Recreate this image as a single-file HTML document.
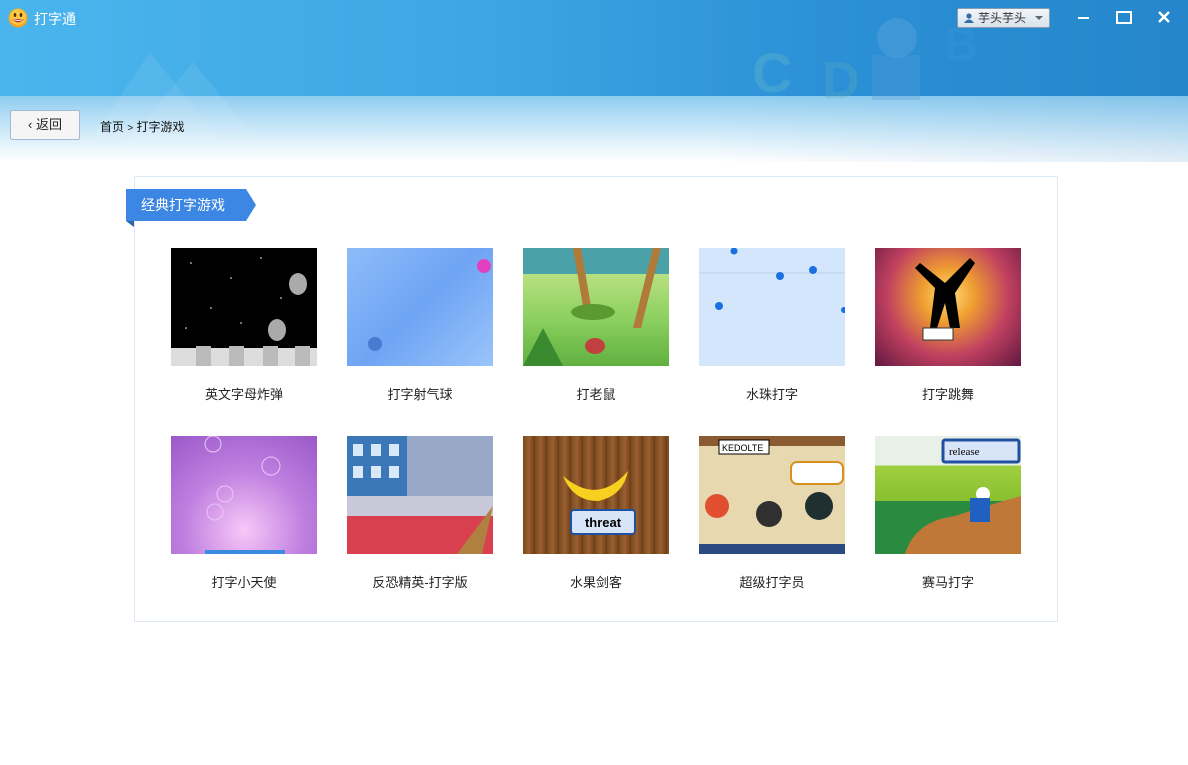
<!DOCTYPE html>
<html><head><meta charset="utf-8">
<style>
*{margin:0;padding:0;box-sizing:border-box}
body{width:1188px;height:765px;overflow:hidden;background:#fff;font-family:"Liberation Sans","Noto Sans CJK SC",sans-serif;position:relative}
.top{position:absolute;left:0;top:0;width:1188px;height:96px;background:linear-gradient(90deg,#4ab5ed 0%,#3ea6e3 40%,#2b90d6 70%,#2586cb 100%)}
.fade{position:absolute;left:0;top:96px;width:1188px;height:66px;background:linear-gradient(180deg,#8fcdf0 0%,#b9e0f6 35%,#e6f4fc 75%,#fff 100%)}
.fade2{position:absolute;left:0;top:96px;width:1188px;height:66px;background:linear-gradient(90deg,rgba(255,255,255,0) 0%,rgba(255,255,255,0) 60%,rgba(60,140,200,.15) 100%)}
.title{position:absolute;left:34px;top:9px;color:#fff;font-size:14px}
.btn{position:absolute;left:10px;top:110px;width:70px;height:30px;border:1px solid #a6b8d8;border-radius:2px;background:#f5f5f5;font-size:13px;color:#222;text-align:center;line-height:28px}
.crumb{position:absolute;left:100px;top:118px;font-size:12px;color:#111}
.user{position:absolute;left:957px;top:8px;width:93px;height:20px;border:1px solid #8a9db0;border-radius:2px;background:linear-gradient(#f2f6fa,#d8e2ec);font-size:12px;color:#333;line-height:18px;padding-left:20px}
.panel{position:absolute;left:134px;top:176px;width:924px;height:446px;border:1px solid #dde9f5}
.tag{position:absolute;left:126px;top:189px;width:120px;height:32px;background:#3b87e3;color:#fff;font-size:14px;line-height:32px;padding-left:15px}
.tag:after{content:"";position:absolute;right:-10px;top:0;border-left:10px solid #3b87e3;border-top:16px solid transparent;border-bottom:16px solid transparent}
.tag:before{content:"";position:absolute;left:0;bottom:-6px;border-top:6px solid #2a63a8;border-left:8px solid transparent}
.g{position:absolute;width:146px;height:118px;overflow:hidden}
.l{position:absolute;width:146px;text-align:center;font-size:13px;color:#222}
</style></head><body>
<div class="top"></div>
<div class="fade"></div><div class="fade2"></div>
<svg style="position:absolute;left:0;top:0" width="1188" height="160">
<polygon points="150,52 90,140 220,140" fill="#fff" opacity=".08"/>
<polygon points="193,62 120,150 265,150" fill="#fff" opacity=".08"/>
<text x="752" y="92" font-size="56" font-weight="bold" fill="#6cc0c8" opacity=".3" font-family="Liberation Sans">C</text>
<text x="822" y="98" font-size="52" font-weight="bold" fill="#5ab0c0" opacity=".3" font-family="Liberation Sans">D</text>
<circle cx="897" cy="38" r="20" fill="#6aa8e0" opacity=".35"/>
<rect x="872" y="55" width="48" height="45" fill="#5a9ad8" opacity=".3"/>
<text x="945" y="60" font-size="46" font-weight="bold" fill="#3a95e0" opacity=".35" font-family="Liberation Sans">B</text>
</svg>
<svg style="position:absolute;left:8px;top:8px" width="20" height="20"><circle cx="10" cy="10" r="9.5" fill="#f6a623"/><circle cx="10" cy="9" r="8" fill="#fbc843"/><ellipse cx="7" cy="7" rx="1.3" ry="2" fill="#5a2d00"/><ellipse cx="13" cy="7" rx="1.3" ry="2" fill="#5a2d00"/><path d="M4 11 Q10 18 16 11 Z" fill="#c0392b"/><path d="M5 11 Q10 13 15 11 L14.5 12 Q10 14 5.5 12Z" fill="#fff"/></svg>
<div class="title">打字通</div>
<div class="user"><svg style="position:absolute;left:6px;top:4px" width="10" height="10"><circle cx="5" cy="3" r="2.6" fill="#2f6fa8"/><path d="M0 10 Q5 3 10 10Z" fill="#2f6fa8"/></svg>芋头芋头<span style="position:absolute;right:6px;top:7px;border-top:4px solid #666;border-left:4px solid transparent;border-right:4px solid transparent"></span></div>
<div style="position:absolute;left:1078px;top:17px;width:11px;height:2px;background:#fff"></div>
<div style="position:absolute;left:1116px;top:11px;width:16px;height:13px;border:2px solid #fff"></div>
<svg style="position:absolute;left:1158px;top:11px" width="12" height="12"><path d="M1 1L11 11M11 1L1 11" stroke="#fff" stroke-width="2.4"/></svg>
<div class="btn">&lsaquo; 返回</div>
<div class="crumb">首页 <span style="font-size:10px">&gt;</span> 打字游戏</div>
<div class="panel"></div>
<div class="tag">经典打字游戏</div>

<div class="g" style="left:171px;top:248px;background:#000"><svg width="146" height="118"><g fill="#fff"><circle cx="20" cy="15" r=".8"/><circle cx="60" cy="30" r=".8"/><circle cx="90" cy="10" r=".8"/><circle cx="40" cy="60" r=".8"/><circle cx="110" cy="50" r=".8"/><circle cx="15" cy="80" r=".8"/><circle cx="70" cy="75" r=".8"/></g><ellipse cx="127" cy="36" rx="9" ry="11" fill="#aaa"/><ellipse cx="106" cy="82" rx="9" ry="11" fill="#aaa"/><rect x="0" y="100" width="146" height="18" fill="#ddd"/><g fill="#bbb"><rect x="25" y="98" width="15" height="20"/><rect x="58" y="98" width="15" height="20"/><rect x="92" y="98" width="15" height="20"/><rect x="124" y="98" width="15" height="20"/></g></svg></div>
<div class="l" style="left:171px;top:384px">英文字母炸弹</div>
<div class="g" style="left:347px;top:248px;background:linear-gradient(135deg,#8ebcf8,#6ea4f4 50%,#9ac4fa)"><svg width="146" height="118"><circle cx="137" cy="18" r="7" fill="#e040c0"/><circle cx="28" cy="96" r="7" fill="#4a7ad0"/></svg></div>
<div class="l" style="left:347px;top:384px">打字射气球</div>
<div class="g" style="left:523px;top:248px;background:linear-gradient(#4aa2a8 0,#4aa2a8 22%,#b8e080 22%,#8cd060 60%,#60b040)"><svg width="146" height="118"><path d="M50 0 L62 70 L70 70 L58 0Z" fill="#b07a3a"/><path d="M130 0 L110 80 L118 80 L138 0Z" fill="#b07a3a"/><ellipse cx="70" cy="64" rx="22" ry="8" fill="#5a9a30"/><ellipse cx="72" cy="98" rx="10" ry="8" fill="#c04040"/><path d="M0 118 L20 80 L40 118Z" fill="#3a8a30"/></svg></div>
<div class="l" style="left:523px;top:384px">打老鼠</div>
<div class="g" style="left:699px;top:248px;background:#d4e6fc"><svg width="146" height="118"><line x1="0" y1="25" x2="146" y2="25" stroke="#b8cde8"/><g fill="#1a70e0"><circle cx="35" cy="3" r="3.5"/><circle cx="81" cy="28" r="4"/><circle cx="114" cy="22" r="4"/><circle cx="20" cy="58" r="4"/><circle cx="145" cy="62" r="3"/></g></svg></div>
<div class="l" style="left:699px;top:384px">水珠打字</div>
<div class="g" style="left:875px;top:248px;background:radial-gradient(circle at 50% 40%,#ffe080 0,#f0a030 25%,#c04060 60%,#601840 100%)"><svg width="146" height="118"><path d="M60 40 L40 20 L45 15 L70 35 L95 10 L100 15 L80 45 L85 80 L75 80 L70 55 L62 80 L55 80Z" fill="#000"/><rect x="48" y="80" width="30" height="12" fill="#fff" stroke="#333"/></svg></div>
<div class="l" style="left:875px;top:384px">打字跳舞</div>

<div class="g" style="left:171px;top:436px;background:radial-gradient(circle at 50% 80%,#f8c8f8,#c080e0 50%,#9a58c8)"><svg width="146" height="118"><g fill="none" stroke="#e8c8f8"><circle cx="42" cy="8" r="8"/><circle cx="100" cy="30" r="9"/><circle cx="54" cy="58" r="8"/><circle cx="44" cy="76" r="8"/></g><rect x="34" y="114" width="80" height="4" fill="#3a8ae0"/></svg></div>
<div class="l" style="left:171px;top:572px">打字小天使</div>
<div class="g" style="left:347px;top:436px;background:#9aa8c8"><svg width="146" height="118"><rect x="0" y="0" width="60" height="118" fill="#3a78b8"/><g fill="#d8e8f8"><rect x="6" y="8" width="10" height="12"/><rect x="24" y="8" width="10" height="12"/><rect x="42" y="8" width="10" height="12"/><rect x="6" y="30" width="10" height="12"/><rect x="24" y="30" width="10" height="12"/><rect x="42" y="30" width="10" height="12"/></g><rect x="0" y="60" width="146" height="58" fill="#c8c8d8"/><rect x="0" y="80" width="146" height="38" fill="#d84050"/><path d="M146 70 L110 118 L135 118Z" fill="#b08040"/></svg></div>
<div class="l" style="left:347px;top:572px">反恐精英-打字版</div>
<div class="g" style="left:523px;top:436px;background:repeating-linear-gradient(90deg,#7a4a20 0,#9a6030 6px,#6a3c18 12px)"><svg width="146" height="118"><path d="M40 40 Q75 70 105 35 Q100 60 75 65 Q50 65 40 40Z" fill="#f8d020"/><rect x="48" y="74" width="64" height="24" rx="3" fill="#d8e4f8" stroke="#2050a0" stroke-width="2"/><text x="80" y="91" font-size="13" font-weight="bold" text-anchor="middle" font-family="Liberation Sans" fill="#000">threat</text></svg></div>
<div class="l" style="left:523px;top:572px">水果剑客</div>
<div class="g" style="left:699px;top:436px;background:#e8d8b0"><svg width="146" height="118"><rect x="0" y="0" width="146" height="10" fill="#8a5a30"/><rect x="20" y="4" width="50" height="14" fill="#fff" stroke="#000"/><text x="23" y="15" font-size="9" font-family="Liberation Sans">KEDOLTE</text><rect x="92" y="26" width="52" height="22" rx="6" fill="#fff" stroke="#d89020" stroke-width="2"/><circle cx="18" cy="70" r="12" fill="#e05030"/><circle cx="70" cy="78" r="13" fill="#303030"/><circle cx="120" cy="70" r="14" fill="#203030"/><rect x="0" y="108" width="146" height="10" fill="#2a4a80"/></svg></div>
<div class="l" style="left:699px;top:572px">超级打字员</div>
<div class="g" style="left:875px;top:436px;background:linear-gradient(#e8f0e8 0,#e8f0e8 25%,#a0d040 25%,#88c030 55%,#2a8a40 55%,#2a8a40 100%)"><svg width="146" height="118"><rect x="68" y="4" width="76" height="22" rx="2" fill="#d8e4f8" stroke="#2050a0" stroke-width="3"/><text x="74" y="19" font-size="11" font-family="Liberation Serif">release</text><path d="M30 118 Q40 85 80 80 Q110 70 146 60 L146 118Z" fill="#c07838"/><circle cx="108" cy="58" r="7" fill="#fff"/><rect x="95" y="62" width="20" height="24" fill="#2060c0"/></svg></div>
<div class="l" style="left:875px;top:572px">赛马打字</div>
</body></html>
